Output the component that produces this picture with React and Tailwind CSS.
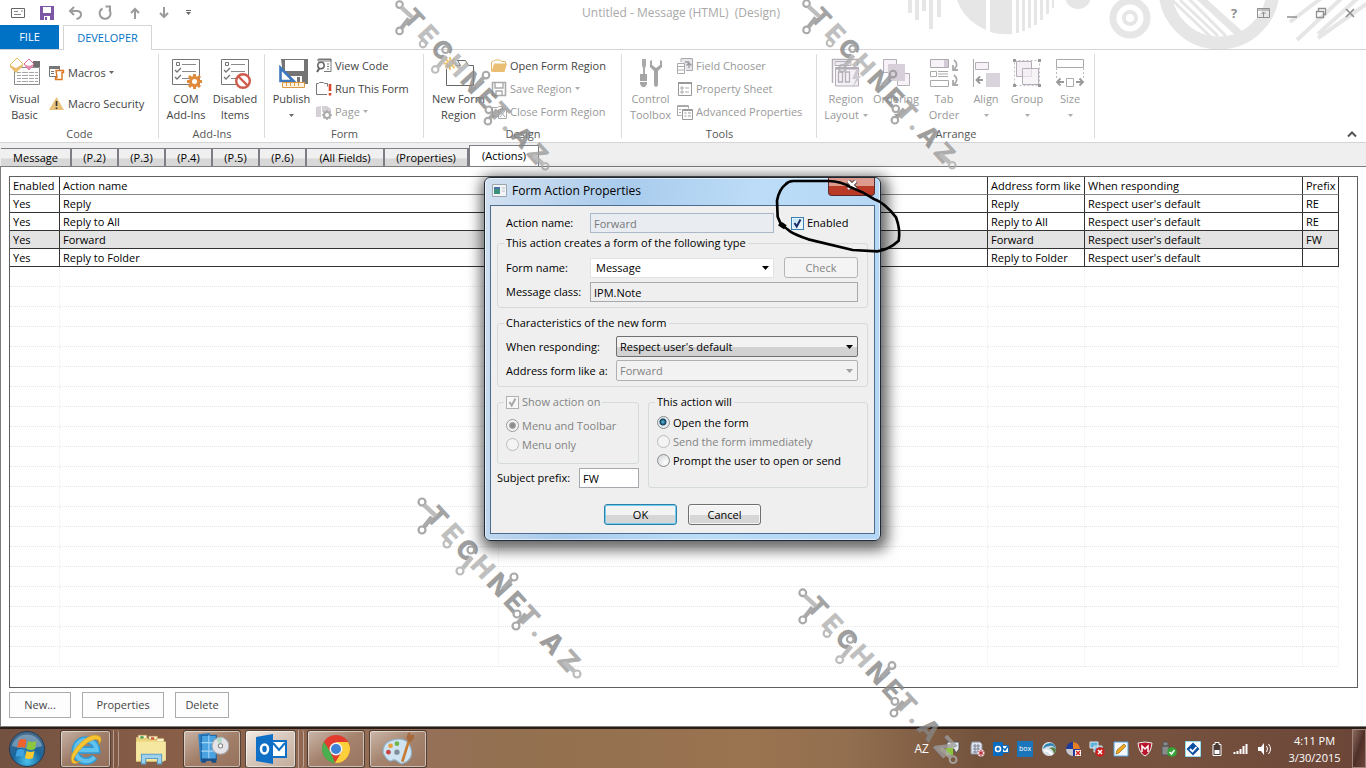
import { useState } from "react";
import clsx from "clsx";

const TABS = ["Message", "(P.2)", "(P.3)", "(P.4)", "(P.5)", "(P.6)", "(All Fields)", "(Properties)", "(Actions)"];

const ACTIONS = [
  { name: "Reply", like: "Reply", prefix: "RE" },
  { name: "Reply to All", like: "Reply to All", prefix: "RE" },
  { name: "Forward", like: "Forward", prefix: "FW" },
  { name: "Reply to Folder", like: "Reply to Folder", prefix: "" },
];

const EMPTY_ROWS = Array.from({ length: 20 }, (_, i) => i);

/* ---------- icons ---------- */

function Svg({ size = 16, box, children, className }) {
  return (
    <svg
      width={size}
      height={size}
      viewBox={`0 0 ${box || size} ${box || size}`}
      fill="none"
      className={clsx("shrink-0", className)}
      aria-hidden="true"
    >
      {children}
    </svg>
  );
}

function Caret({ className }) {
  return (
    <svg width="5" height="3" viewBox="0 0 5 3" className={clsx("shrink-0", className)} aria-hidden="true">
      <path d="M0 0h5L2.500 3z" fill="currentColor" />
    </svg>
  );
}

const VisualBasicIcon = () => (
  <Svg size={32}>
    <path d="M5.500 10.500h25v17h-25z" fill="#fff" stroke="#8b8b8b" />
    <path d="M24 4h7v6h-7z" fill="#6d6d6d" />
    <path d="M8 15.500h21M8 18.500h21M8 21.500h21M8 24.500h21" stroke="#a6a6a6" />
    <path d="M12.500 12v15M19.500 12v15M25.500 12v15" stroke="#fff" />
    <path d="M1 8l7-7 6 6-7 7z" fill="#fff" stroke="#e3b968" />
    <path d="M1 8l6 3 7-4v2l-7 7-6-6z" fill="#e9bf6e" />
    <path d="M15 7l5-5 5 5-5 6z" fill="#fff" stroke="#d9689a" />
    <path d="M15 7l5 2 5-2-5 6z" fill="#e58bb1" />
  </Svg>
);

const MacrosIcon = () => (
  <Svg>
    <path d="M.5 2.500h10v9H.5z" fill="#fff" stroke="#777" />
    <path d="M0 1h11v3H0z" fill="#777" />
    <path d="M2 6.500h3M2 8.500h3M7 6.500h3" stroke="#777" />
    <path d="M7 5.500h7.500v2H13V14.500H6.500v-2H8z" fill="#fff" stroke="#d9761f" strokeWidth="1.400" />
  </Svg>
);

const WarningIcon = () => (
  <Svg>
    <path d="M7.500 1L15 14H0z" fill="#e9c27c" />
    <path d="M7.500 5v5M7.500 11.500v1.500" stroke="#333" strokeWidth="1.600" />
  </Svg>
);

const Checklist = () => (
  <>
    <path d="M2.500 2.500h27v25h-27z" fill="#fff" stroke="#777" />
    <path d="M12 7.500h14M12 14.500h14M12 21.500h8" stroke="#8a8a8a" />
    <path d="M6.500 5.500h3v3h-3z" stroke="#777" />
    <path d="M5 13l2 2 4-4M5 20l2 2 4-4" stroke="#777" strokeWidth="1.300" />
  </>
);

const ComAddInsIcon = () => (
  <Svg size={32}>
    <Checklist />
    <path d="M24.500 17v15M17 24.500h15M19 19l11 11M30 19L19 30" stroke="#e08a3c" strokeWidth="3" />
    <circle cx="24.500" cy="24.500" r="5.500" fill="#e08a3c" />
    <circle cx="24.500" cy="24.500" r="2.500" fill="#fff" />
  </Svg>
);

const DisabledItemsIcon = () => (
  <Svg size={32}>
    <Checklist />
    <circle cx="24" cy="24" r="6.800" fill="#fff" stroke="#cf5b4b" strokeWidth="2.400" />
    <path d="M19.500 19.500l9 9" stroke="#cf5b4b" strokeWidth="2.400" />
  </Svg>
);

const PublishIcon = () => (
  <Svg size={32}>
    <path d="M5 2h27v25H8z" fill="#757575" />
    <path d="M9 3h19v11H9z" fill="#fff" />
    <path d="M12 19h14v8H12z" fill="#fff" />
    <path d="M21 20h3v6h-3z" fill="#757575" />
    <path d="M4.500 11v13h13z" fill="#fff" stroke="#3f78bd" strokeWidth="2.600" />
    <path d="M6.500 25.500h22v5h-22z" fill="#fdf3e0" stroke="#dd9a45" />
    <path d="M10.500 26v3M14.500 26v3M18.500 26v3M22.500 26v3" stroke="#dd9a45" />
  </Svg>
);

const ViewCodeIcon = () => (
  <Svg>
    <path d="M3 1.500h12v12H8" stroke="#777" />
    <path d="M2 1h13v2H2zM11 6h2M11 8.500h2M11 11h2" stroke="#777" />
    <circle cx="5" cy="7.500" r="3.200" fill="#fff" stroke="#666" strokeWidth="1.500" />
    <path d="M3.500 10L1 14" stroke="#666" strokeWidth="2" />
  </Svg>
);

const RunFormIcon = () => (
  <Svg>
    <path d="M11 13.500H.5v-11h2l1-1h4l1 1h3v3" stroke="#777" />
    <path d="M14 3v7M14 12v2.500" stroke="#d9482b" strokeWidth="2.600" />
  </Svg>
);

const PageIcon = () => (
  <Svg>
    <path d="M0 3l5-1v11H0zM6 2h5l4 3v3H6z" fill="#d5d0d6" />
    <circle cx="11" cy="11" r="3" stroke="#aaa" strokeWidth="2" />
    <path d="M11 6v2M11 14v2M6 11h2M14 11h2M7.500 7.500l1.500 1.500M13 13l1.500 1.500M14.500 7.500L13 9M9 13l-1.500 1.500" stroke="#aaa" strokeWidth="1.500" />
  </Svg>
);

const NewRegionIcon = () => (
  <Svg size={32}>
    <path d="M3.500 12v16.500h27v-20h-5l-3-5h-8l3 5h-5" stroke="#666" />
    <path d="M7 0v13M.5 6.500h13M2.500 2l9 9M11.500 2l-9 9" stroke="#edc36b" strokeWidth="1.800" />
    <circle cx="7" cy="6.500" r="2" fill="#fff" />
  </Svg>
);

const OpenFolderIcon = () => (
  <Svg>
    <path d="M.5 13V4l4-2h5l1 1.500h4V6" fill="#fff" stroke="#e3b968" />
    <path d="M3 5.500h13L13.500 14H.5z" fill="#eabf73" />
  </Svg>
);

const SaveRegionIcon = () => (
  <Svg>
    <path d="M1.500 1.500h13v13h-13z" stroke="#aaa" strokeWidth="1.600" />
    <path d="M4 2v5h8V2M5 14v-4h6v4" stroke="#aaa" strokeWidth="1.400" />
  </Svg>
);

const CloseRegionIcon = () => (
  <Svg>
    <path d="M1.500 3.500h5l1-1h4v3M1.500 3.500v9h5" stroke="#aaa" />
    <path d="M7.500 5.500h8v9h-8zM9 7l5 6M14 7l-5 6" stroke="#aaa" />
  </Svg>
);

const ToolboxIcon = () => (
  <Svg size={32}>
    <path d="M7 2h4v7l-1 2v6H8v-6L7 9z" fill="#aaa" />
    <path d="M5 17h7v10l-2 3H7l-2-3z" fill="#a5a5a5" />
    <path d="M5 24.500h7" stroke="#fff" />
    <path d="M15 4v6l4 4v14q2 4 4 0V14l4-4V4l-2-1v5l-4 3-4-3V3z" fill="#a5a5a5" />
  </Svg>
);

const FieldChooserIcon = () => (
  <Svg>
    <path d="M4 .5h11.500v12H9M4 .5V4" fill="#e9e5ec" stroke="#aaa" />
    <path d="M.5 5.500h7v10h-7zM.5 8.500h7M.5 12h7" stroke="#aaa" />
    <path d="M8 4h4M12 10V5M9.500 7.500L12 5l2.500 2.500" stroke="#999" strokeWidth="1.300" />
  </Svg>
);

const PropertySheetIcon = () => (
  <Svg>
    <path d="M1.500 1.500h13v13h-13z" stroke="#999" />
    <path d="M1 2h14" stroke="#999" strokeWidth="2" />
    <path d="M4 6h2v2H4zM4 10h2v2H4zM8 7h4M8 11h4" stroke="#aaa" />
  </Svg>
);

const AdvancedIcon = () => (
  <Svg>
    <path d="M.5 1.500h11v3M.5 1.500v10h4M0 2.500h12M2 5.500h2M2 8.500h2" stroke="#aaa" />
    <path d="M5.500 5.500h10v10h-10zM5 6.500h11M7.500 9h2M7.500 12h2M11 9h3M11 12h3" stroke="#999" />
  </Svg>
);

const RegionLayoutIcon = () => (
  <Svg size={32}>
    <path d="M2.500 26V2.500h25V9" stroke="#b5aeb8" strokeWidth="1.500" />
    <path d="M5 4.500h16v4H5z" fill="#efebf2" stroke="#b5aeb8" />
    <path d="M5.500 10.500h23V29h-23z" fill="#f4f1f6" stroke="#b5aeb8" />
    <path d="M5 11.500h24" stroke="#b5aeb8" strokeWidth="2" />
    <path d="M8.500 15h4v10h-4zM15.500 15h4v10h-4z" stroke="#b5aeb8" strokeWidth="1.300" />
    <path d="M26 13l-4 9h4l-4 9 9-12h-4l3-6z" fill="#cfcad2" />
  </Svg>
);

const OrderingIcon = () => (
  <Svg size={32}>
    <path d="M3.500 2.500h13v13h-13zM17.500 16.500h12v12h-12z" fill="#f6f2f8" stroke="#b5aeb8" />
    <path d="M8 7h17v17H8z" fill="#d7d0da" />
  </Svg>
);

const TabOrderIcon = () => (
  <Svg size={32}>
    <path d="M2.500 2.500h18v8h-18z" fill="#f6f2f8" stroke="#aaa" />
    <path d="M16 3h4v7h-4z" fill="#d3ccd6" />
    <path d="M2.500 14.500h6v5h-6zM10 14.500h10M10 17h10M10 19.500h10M2.500 23.500h18v6h-18z" stroke="#aaa" />
    <path d="M26 3q6 5-1 10M25 8v5h5M26 18q6 5-1 10M25 23v5h5" stroke="#aaa" strokeWidth="1.800" />
  </Svg>
);

const AlignIcon = () => (
  <Svg size={32}>
    <path d="M3.500 2v28" stroke="#aaa" />
    <path d="M5.500 5.500h13v7h-13z" fill="#f6f2f8" stroke="#b5aeb8" />
    <path d="M16 16h14v14H16z" fill="#d9d3dc" />
    <path d="M13 23H7M10 19.500L6.500 23l3.500 3.500" stroke="#999" strokeWidth="1.800" />
  </Svg>
);

const GroupIcon = () => (
  <Svg size={32}>
    <path d="M3.500 3.500h25v25h-25z" stroke="#c3bdc6" strokeDasharray="2 2" />
    <path d="M5.500 4.500h15v15h-15z" fill="#f3eff5" stroke="#b5aeb8" />
    <path d="M11.500 11.500h16v16h-16z" fill="#f3eff5" fillOpacity=".7" stroke="#b5aeb8" />
    <path d="M2 2h3v3H2zM27 2h3v3h-3zM2 27h3v3H2zM27 27h3v3h-3z" fill="#999" />
  </Svg>
);

const SizeIcon = () => (
  <Svg size={32}>
    <path d="M2.500 2.500h27v8h-27z" stroke="#aaa" />
    <path d="M2.500 11v10M29.500 11v10" stroke="#bbb" strokeDasharray="2 2" />
    <path d="M12.500 21.500h7v8h-7z" stroke="#aaa" />
    <path d="M10 25H3M6.500 21.500L3 25l3.500 3.500M22 25h7M25.500 21.500L29 25l-3.500 3.500" stroke="#999" strokeWidth="1.800" />
  </Svg>
);

/* ---------- title bar ---------- */

function TitleArt() {
  return (
    <svg width="466" height="50" viewBox="900 0 466 50" className="absolute right-0 top-0" aria-hidden="true">
      <g fill="#e6e6e6">
        <path d="M908 0h4v13h-4zM915 0h4v20h-4zM922 0h4v11h-4zM929 0h4v29h-4zM937 0h4v17h-4z" />
        <path d="M957 0Q964 20 986 30V0zM990 0v32q10 3 22 2V0zM1016 0h3v33h-3zM1022 0h3v31h-3zM1028 0h3v28h-3zM1034 0h3v25h-3zM1040 0h3v20h-3zM1046 0h3v14h-3zM1052 0h2v8h-2z" />
        <circle cx="1078" cy="-4" r="13" />
      </g>
      <g fill="none" stroke="#e6e6e6">
        <circle cx="1130" cy="18" r="17" strokeWidth="7" />
        <circle cx="1130" cy="18" r="6" strokeWidth="4" />
        <circle cx="1219" cy="-11" r="54" strokeWidth="13" />
        <path d="M1172 0l40 38M1180 0l38 36M1188 -2l38 38M1205 0l36 32" strokeWidth="3" />
        <path d="M1198 -4l42 39" strokeWidth="7" />
        <path d="M1324 -4l-34 26M1344 -4l-47 44M1358 -2l-40 36M1372 0l-54 38" strokeWidth="4" />
      </g>
    </svg>
  );
}

function TitleBar() {
  const quick = "flex h-6 w-7 items-center justify-center";
  const quickWide = "flex h-6 w-[30px] items-center justify-center";
  return (
    <div className="relative flex h-[25px] items-center">
      <TitleArt />
      <div className="relative flex flex-1 items-center pl-1 text-[#9b9b9b]">
        <button className={quick} aria-label="Message">
          <Svg>
            <path d="M1.500 3.500h13v9h-13z" stroke="#666" />
            <path d="M4 6.500h4M4 9.500h7M11 6h2" stroke="#888" />
          </Svg>
        </button>
        <button className={quickWide} aria-label="Save">
          <Svg>
            <path d="M1 1h14v14H1z" fill="#7b57a5" />
            <path d="M4 2h8v6H4zM5 11h6v4H5z" fill="#fff" />
            <path d="M6 12h2v3H6z" fill="#7b57a5" />
          </Svg>
        </button>
        <button className={quick} aria-label="Undo">
          <Svg>
            <path d="M2 6h7q4 0 4 3.500T8.500 14M6 2L2 6l4 4" stroke="currentColor" strokeWidth="2" />
          </Svg>
        </button>
        <button className={quickWide} aria-label="Redo">
          <Svg>
            <path d="M5.500 3.500A5.500 5.500 0 1 0 12 4.500M8.500 1.500H13V6" stroke="currentColor" strokeWidth="2" />
          </Svg>
        </button>
        <button className={quickWide} aria-label="Previous">
          <Svg>
            <path d="M8 14V4M4 8l4-4 4 4" stroke="currentColor" strokeWidth="2" />
          </Svg>
        </button>
        <button className={quick} aria-label="Next">
          <Svg>
            <path d="M8 2v10M4 8l4 4 4-4" stroke="currentColor" strokeWidth="2" />
          </Svg>
        </button>
        <button className="flex h-6 w-5 flex-col items-center justify-center gap-px text-[#666]" aria-label="Customize">
          <span className="h-px w-[5px] bg-[#666]" />
          <Caret />
        </button>
      </div>
      <h1 className="relative text-[12px] whitespace-pre text-[#a9a9a9]">Untitled - Message (HTML)  (Design)</h1>
      <div className="relative flex flex-1 items-center justify-end gap-[13px] pr-2 text-[#8f8f8f]">
        <button className="w-4 text-[13px] font-bold" aria-label="Help">?</button>
        <button aria-label="Ribbon display options">
          <Svg>
            <path d="M2.500 3.500h12v9h-12zM2 5h13M8.500 12V7M6.500 9l2-2 2 2" stroke="currentColor" />
          </Svg>
        </button>
        <button aria-label="Minimize">
          <Svg>
            <path d="M3 12h10" stroke="currentColor" strokeWidth="1.500" />
          </Svg>
        </button>
        <button aria-label="Restore">
          <Svg>
            <path d="M3.500 6.500h7v6h-7zM5.500 6V3.500h7v6H11" stroke="currentColor" strokeWidth="1.300" />
          </Svg>
        </button>
        <button aria-label="Close">
          <Svg>
            <path d="M4 4l8 8M12 4l-8 8" stroke="currentColor" strokeWidth="1.700" />
          </Svg>
        </button>
      </div>
    </div>
  );
}

/* ---------- ribbon ---------- */

function RibbonGroup({ label, className, children }) {
  return (
    <section className={clsx("relative flex shrink-0 flex-col pt-1", className)}>
      <div className="flex h-18">{children}</div>
      <h2 className="text-center leading-4 text-[#555]">{label}</h2>
      <span className="absolute top-1 right-0 h-21 w-px bg-[#dcdcdc]" />
    </section>
  );
}

function BigButton({ icon, lines, caret, disabled, className }) {
  return (
    <button
      disabled={disabled}
      className={clsx(
        "flex h-[69px] shrink-0 flex-col items-center",
        disabled ? "text-[#999]" : "text-[#444]",
        className
      )}
    >
      <span className="flex h-[37px] items-center">{icon}</span>
      <span className="leading-4 whitespace-nowrap">{lines[0]}</span>
      <span className="flex h-4 items-center gap-1 leading-4 whitespace-nowrap">
        {lines[1]}
        {caret && <Caret className="opacity-80" />}
      </span>
    </button>
  );
}

function SmallButton({ icon, label, caret, disabled }) {
  return (
    <button
      disabled={disabled}
      className={clsx(
        "flex h-[23px] items-center gap-[3px] whitespace-nowrap",
        disabled ? "text-[#999]" : "text-[#444]"
      )}
    >
      {icon}
      {label}
      {caret && <Caret className="opacity-80" />}
    </button>
  );
}

function Ribbon() {
  return (
    <div className="flex h-[93px] border-b border-[#d4d4d4] bg-white">
      <RibbonGroup label="Code" className="w-[159px]">
        <BigButton icon={<VisualBasicIcon />} lines={["Visual", "Basic"]} className="w-[49px]" />
        <div className="flex flex-col gap-2 pt-[7px]">
          <SmallButton icon={<MacrosIcon />} label="Macros" caret />
          <SmallButton icon={<WarningIcon />} label="Macro Security" />
        </div>
      </RibbonGroup>
      <RibbonGroup label="Add-Ins" className="w-[106px] px-0.5">
        <BigButton icon={<ComAddInsIcon />} lines={["COM", "Add-Ins"]} className="w-[50px]" />
        <BigButton icon={<DisabledItemsIcon />} lines={["Disabled", "Items"]} className="w-12" />
      </RibbonGroup>
      <RibbonGroup label="Form" className="w-[159px] px-0.5">
        <BigButton icon={<PublishIcon />} lines={["Publish", ""]} caret className="w-[49px]" />
        <div className="flex flex-col">
          <SmallButton icon={<ViewCodeIcon />} label="View Code" />
          <SmallButton icon={<RunFormIcon />} label="Run This Form" />
          <SmallButton icon={<PageIcon />} label="Page" caret disabled />
        </div>
      </RibbonGroup>
      <RibbonGroup label="Design" className="w-[198px] px-0.5">
        <BigButton icon={<NewRegionIcon />} lines={["New Form", "Region"]} className="w-[65px]" />
        <div className="flex flex-col">
          <SmallButton icon={<OpenFolderIcon />} label="Open Form Region" />
          <SmallButton icon={<SaveRegionIcon />} label="Save Region" caret disabled />
          <SmallButton icon={<CloseRegionIcon />} label="Close Form Region" disabled />
        </div>
      </RibbonGroup>
      <RibbonGroup label="Tools" className="w-[195px] px-0.5">
        <BigButton icon={<ToolboxIcon />} lines={["Control", "Toolbox"]} disabled className="w-[53px]" />
        <div className="flex flex-col">
          <SmallButton icon={<FieldChooserIcon />} label="Field Chooser" disabled />
          <SmallButton icon={<PropertySheetIcon />} label="Property Sheet" disabled />
          <SmallButton icon={<AdvancedIcon />} label="Advanced Properties" disabled />
        </div>
      </RibbonGroup>
      <RibbonGroup label="Arrange" className="w-[278px] px-1">
        <BigButton icon={<RegionLayoutIcon />} lines={["Region", "Layout"]} caret disabled className="w-[50px]" />
        <BigButton icon={<OrderingIcon />} lines={["Ordering", ""]} caret disabled className="w-[50px]" />
        <BigButton icon={<TabOrderIcon />} lines={["Tab", "Order"]} disabled className="w-[46px]" />
        <BigButton icon={<AlignIcon />} lines={["Align", ""]} caret disabled className="w-[38px]" />
        <BigButton icon={<GroupIcon />} lines={["Group", ""]} caret disabled className="w-11" />
        <BigButton icon={<SizeIcon />} lines={["Size", ""]} caret disabled className="w-[42px]" />
      </RibbonGroup>
      <div className="flex flex-1 items-end justify-end pr-2 pb-1">
        <button aria-label="Collapse the ribbon">
          <svg width="12" height="8" viewBox="0 0 12 8" fill="none" aria-hidden="true">
            <path d="M2 6.500l4-4 4 4" stroke="#555" strokeWidth="2" />
          </svg>
        </button>
      </div>
    </div>
  );
}

/* ---------- actions page ---------- */

function PageTabs({ active, onSelect }) {
  return (
    <div className="flex h-[23px] items-end bg-[#efefef] pl-px">
      {TABS.map((tab) => (
        <button
          key={tab}
          onClick={() => onSelect(tab)}
          className={clsx(
            "shrink-0 border-t border-r border-[#7d7d86] text-center text-black",
            tab === active
              ? "-mb-px h-[22px] border-l bg-white pb-0.5"
              : "h-[18px] border-r-2 bg-linear-to-b from-[#f0f0f0] from-50% to-[#d8d8d8] to-60%",
            tab.startsWith("(P.") && "w-[47px]",
            tab === "Message" && "w-[71px]",
            tab === "(All Fields)" && "w-[78px]",
            tab === "(Properties)" && "w-[84px]",
            tab === "(Actions)" && "w-[70px]"
          )}
        >
          {tab}
        </button>
      ))}
    </div>
  );
}

function ActionsTable() {
  const th = "overflow-hidden border-r border-b border-[#85858b] border-r-[#333] px-[3px] text-left font-normal whitespace-nowrap";
  const td = "border-r border-b border-[#333] px-[3px] whitespace-nowrap";
  const empty = "border-r border-b border-dotted border-[#efefef] border-b-[#e6e6e6]";
  return (
    <div className="flex-1 border border-[#5f5f5f] pr-[18px]">
      <table className="w-full table-fixed border-separate border-spacing-0 leading-4 text-black">
        <colgroup>
          <col className="w-[50px]" />
          <col className="w-[33%]" />
          <col />
          <col className="w-[97px]" />
          <col className="w-[218px]" />
          <col className="w-9" />
        </colgroup>
        <thead>
          <tr className="h-[18px]">
            <th className={th}>Enabled</th>
            <th className={th}>Action name</th>
            <td className={th} />
            <th className={th}>Address form like</th>
            <th className={th}>When responding</th>
            <th className={th}>Prefix</th>
          </tr>
        </thead>
        <tbody>
          {ACTIONS.map((a) => (
            <tr key={a.name} className={clsx("h-[18px]", a.name === "Forward" && "bg-[#e3e3e3]")}>
              <td className={td}>Yes</td>
              <td className={td}>{a.name}</td>
              <td className={td}></td>
              <td className={td}>{a.like}</td>
              <td className={td}>Respect user's default</td>
              <td className={td}>{a.prefix}</td>
            </tr>
          ))}
          {EMPTY_ROWS.map((i) => (
            <tr key={i} className="h-5">
              <td className={empty} />
              <td className={empty} />
              <td className={empty} />
              <td className={empty} />
              <td className={empty} />
              <td className={empty} />
            </tr>
          ))}
        </tbody>
      </table>
    </div>
  );
}

/* ---------- dialog ---------- */

function TextField({ className, ...props }) {
  return <input type="text" className={clsx("h-5 border px-[3px]", className)} {...props} />;
}

function DropDown({ id, value, options, disabled, className, wrapper }) {
  return (
    <div className={clsx("relative flex", wrapper)}>
      <select
        id={id}
        defaultValue={value}
        disabled={disabled}
        className={clsx("w-full appearance-none border pr-5 opacity-100", className)}
      >
        {options.map((o) => (
          <option key={o}>{o}</option>
        ))}
      </select>
      <svg
        width="7"
        height="4"
        viewBox="0 0 7 4"
        className="pointer-events-none absolute top-1/2 right-[5px] -translate-y-1/2"
        aria-hidden="true"
      >
        <path d="M0 0h7L3.500 4z" fill={disabled ? "#a0a0a0" : "#000"} />
      </svg>
    </div>
  );
}

function CheckBox({ label, disabled }) {
  return (
    <label className={clsx("flex items-center gap-[3px]", disabled ? "text-[#838383]" : "text-black")}>
      <span className="relative flex">
        <input
          type="checkbox"
          defaultChecked
          disabled={disabled}
          className={clsx(
            "peer h-[13px] w-[13px] appearance-none border",
            disabled
              ? "border-[#b1b1b1] bg-[#f8f8f8]"
              : "border-[#3c7fb1] bg-linear-to-br from-[#b5dff5] to-white inset-ring inset-ring-[#e3f4fc]"
          )}
        />
        <svg
          width="13"
          height="13"
          viewBox="0 0 13 13"
          fill="none"
          className="pointer-events-none absolute inset-0 hidden peer-checked:block"
          aria-hidden="true"
        >
          <path d="M3.500 6l2.200 3.500L9.500 2.500" stroke={disabled ? "#a8a8a8" : "#1b2b6b"} strokeWidth="2" />
        </svg>
      </span>
      {label}
    </label>
  );
}

function Radio({ name, label, checked, disabled }) {
  return (
    <label className={clsx("flex h-[19px] items-center gap-[3px]", disabled ? "text-[#838383]" : "text-black")}>
      <input
        type="radio"
        name={name}
        defaultChecked={checked}
        disabled={disabled}
        className={clsx(
          "h-[13px] w-[13px] appearance-none rounded-full border",
          disabled
            ? "border-[#bcbcbc] bg-[#f4f4f4] checked:border-[#999] checked:bg-[radial-gradient(circle,#8c8c8c_0_2px,#a9a9a9_3px,#f4f4f4_4px)]"
            : "border-[#8a8c8e] bg-[radial-gradient(circle_at_70%_70%,#fff,#cfd2d5)] checked:bg-[radial-gradient(circle_at_45%_45%,#5cc4e8_0,#123c5a_3px,#123c5a_3px,#e4eaee_4px)]"
        )}
      />
      {label}
    </label>
  );
}

function Group({ legend, className, children }) {
  return (
    <fieldset className={clsx("rounded-[3px] border border-[#d5dadd] px-2", className)}>
      <legend className="-ml-0.5 h-4 px-0.5 leading-4">{legend}</legend>
      {children}
    </fieldset>
  );
}

function Scribble() {
  return (
    <svg
      width="135"
      height="80"
      viewBox="870 18 405 240"
      fill="none"
      className="pointer-events-none absolute -top-0.5 left-[285px]"
      aria-hidden="true"
    >
      <path
        d="M905 168L893 140L891 92Q897 58 918 42Q925 34 940 33L1045 33Q1085 34 1112 52Q1150 66 1180 86Q1215 98 1248 142Q1262 180 1256 212Q1228 238 1192 244L1118 240Q1060 226 985 208Q945 194 930 184Q915 170 900 164"
        stroke="#000"
        strokeWidth="8"
        strokeLinejoin="round"
        strokeLinecap="round"
      />
      <path d="M894 166l12-10 14 10-8 12z" fill="#000" />
    </svg>
  );
}

function ActionDialog() {
  const button =
    "h-[21px] w-[73px] rounded-[3px] border bg-linear-to-b from-[#f3f3f3] from-50% to-[#d6d6d6] to-55% text-black inset-ring";
  return (
    <div
      role="dialog"
      aria-labelledby="dialog-title"
      className="absolute top-[177px] left-[calc(50%-199px)] w-[397px] rounded-md border border-[#1e2a38] bg-[linear-gradient(100deg,#d3e1f0_0,#a9cbec_30%,#bcdcf7_60%,#b3d6f5_100%)] px-[5px] pb-1.5 text-black inset-ring inset-ring-white/60 shadow-[2px_4px_14px_5px_rgba(0,0,0,0.6)]"
    >
      <div className="flex h-[27px] justify-between">
        <div className="flex items-center gap-[5px] pb-0.5 pl-0.5">
          <Svg size={15}>
            <path d="M.5 1.500h14v12H.5z" fill="#f1f3f4" stroke="#9aa7b3" />
            <path d="M2 4h6v7H2z" fill="#3f8f7d" />
            <path d="M2 4h6v2H2z" fill="#4a72a8" />
            <path d="M10 5h3M10 8h3" stroke="#b9c2c9" />
          </Svg>
          <h2 id="dialog-title" className="text-[12px]">Form Action Properties</h2>
        </div>
        <button
          aria-label="Close"
          className="flex h-[18px] w-[47px] items-center justify-center rounded-b-[4px] border border-t-0 border-[#5b2a2a] bg-linear-to-b from-[#dd9a8e] from-45% to-[#b93a26] to-50% pb-1"
        >
          <svg width="12" height="10" viewBox="0 0 12 10" fill="none" aria-hidden="true">
            <path d="M2 1l8 8M10 1L2 9" stroke="#4b3535" strokeWidth="4.500" />
            <path d="M2 1l8 8M10 1L2 9" stroke="#fff" strokeWidth="2.500" />
          </svg>
        </button>
      </div>
      <form
        className="flex flex-col border border-[#4d6b8c] bg-[#efefef] px-1.5 pt-[7px] pb-2"
        onSubmit={(e) => e.preventDefault()}
      >
        <div className="flex items-center pl-[9px]">
          <label htmlFor="action-name" className="w-[84px]">Action name:</label>
          <TextField
            id="action-name"
            defaultValue="Forward"
            disabled
            className="mr-[17px] w-[184px] border-[#a9b9c8] bg-[#e9edf2] text-[#777]"
          />
          <CheckBox label="Enabled" />
        </div>

        <Group legend="This action creates a form of the following type" className="mt-0.5 flex flex-col pt-1.5 pb-[5px]">
          <div className="flex flex-col gap-1">
            <div className="flex items-center">
              <label htmlFor="form-name" className="w-[84px]">Form name:</label>
              <DropDown
                id="form-name"
                value="Message"
                options={["Message", "Post", "Task"]}
                wrapper="mr-2.5 w-[184px]"
                className="h-5 border-[#e3e3e3] bg-white pl-[5px]"
              />
              <button disabled className="h-[21px] w-[74px] rounded-[3px] border border-[#b5b5b5] bg-[#f4f4f4] text-[#838383]">
                Check
              </button>
            </div>
            <div className="flex items-center">
              <label htmlFor="message-class" className="w-[84px]">Message class:</label>
              <TextField
                id="message-class"
                defaultValue="IPM.Note"
                readOnly
                className="w-[268px] border-[#a5a9ad] bg-[#efefef]"
              />
            </div>
          </div>
        </Group>

        <Group legend="Characteristics of the new form" className="mt-[7px] pt-[5px] pb-[5px]">
          <div className="flex flex-col gap-[3px]">
            <div className="flex items-center">
              <label htmlFor="responding" className="w-[110px]">When responding:</label>
              <DropDown
                id="responding"
                value="Respect user's default"
                options={["Respect user's default", "Do not include original message"]}
                wrapper="w-[242px]"
                className="h-[21px] rounded-[2px] border-[#707070] bg-linear-to-b from-[#f2f2f2] from-50% to-[#d2d2d2] to-55% pl-[3px]"
              />
            </div>
            <div className="flex items-center">
              <label htmlFor="address-like" className="w-[110px]">Address form like a:</label>
              <DropDown
                id="address-like"
                value="Forward"
                options={["Forward", "Reply", "Reply to All"]}
                disabled
                wrapper="w-[242px]"
                className="h-[21px] rounded-[2px] border-[#b0b0b0] bg-[#f2f2f2] pl-[3px] text-[#838383]"
              />
            </div>
          </div>
        </Group>

        <div className="mt-[7px] flex gap-[9px]">
          <div className="flex w-[142px] flex-col gap-1">
            <Group legend={<CheckBox label="Show action on" disabled />} className="pt-1.5 pb-[9px]">
              <Radio name="show" label="Menu and Toolbar" checked disabled />
              <Radio name="show" label="Menu only" disabled />
            </Group>
            <div className="flex items-center justify-between">
              <label htmlFor="prefix">Subject prefix:</label>
              <TextField id="prefix" defaultValue="FW" className="w-[60px] border-[#a5a9ad] bg-white" />
            </div>
          </div>
          <Group legend="This action will" className="flex-1 pt-[3px]">
            <Radio name="will" label="Open the form" checked />
            <Radio name="will" label="Send the form immediately" disabled />
            <Radio name="will" label="Prompt the user to open or send" />
          </Group>
        </div>

        <div className="mt-4 flex justify-center gap-[11px]">
          <button className={clsx(button, "border-[#2f7fa8] inset-ring-[#6fcdf0]")}>OK</button>
          <button className={clsx(button, "border-[#707070] inset-ring-white/70")}>Cancel</button>
        </div>
      </form>
      <Scribble />
    </div>
  );
}

/* ---------- taskbar ---------- */

function TaskButton({ label, active, className, children }) {
  return (
    <button
      aria-label={label}
      className={clsx(
        "flex h-[38px] items-center justify-center rounded-[3px] border border-[#3a2a22]/80 inset-ring inset-ring-white/50",
        active
          ? "bg-linear-to-br from-[#f3ebe4] via-[#d6c6ba] to-[#c2ab9b]"
          : "bg-linear-to-br from-[#d9cabf]/80 via-[#ab8c77]/70 to-[#9a7863]/70",
        className
      )}
    >
      {children}
    </button>
  );
}

function TrayIcons() {
  return (
    <div className="flex items-center gap-2">
      <Svg>
        <path d="M2 1h12v7l-3 4-2-4H2z" fill="#e9e9e9" stroke="#555" />
        <path d="M1 7h7v7H1z" fill="#8cc63f" />
      </Svg>
      <Svg>
        <path d="M3 1h8l2 2v10H2V4z" fill="#dfe3ec" stroke="#8a8fa0" />
        <path d="M4 5h7M4 8h7M4 11h5M6 3v9M9 3v9" stroke="#7d8498" />
        <circle cx="12" cy="12" r="3.500" fill="#f1dede" />
        <path d="M12 9v6M9.500 10.500l5 3M14.500 10.500l-5 3" stroke="#b8232f" />
      </Svg>
      <Svg>
        <path d="M0 1h10v14H0zM9 4h7v8H9z" fill="#0a6cc0" />
        <circle cx="5" cy="8" r="2.500" stroke="#fff" strokeWidth="1.500" />
        <path d="M10 5h5v6h-5z" fill="#fff" />
        <path d="M10 7l2 2 3-4" stroke="#0a6cc0" strokeWidth="1.500" />
      </Svg>
      <span className="flex h-4 w-4 items-center justify-center bg-[#1b75bb] text-[7px] leading-4 text-white">box</span>
      <Svg>
        <circle cx="8" cy="8" r="7" fill="#d9e2e8" />
        <path d="M2 8q1-6 8-6 4 1 5 6-3-4-6-3-4 0-7 3z" fill="#2b83b5" />
        <path d="M8 7q4 1 5 6 2-2 2-5-3-3-7-1z" fill="#5d7f48" />
        <path d="M3 10q4-2 8 4" stroke="#fff" strokeWidth="2" />
      </Svg>
      <Svg>
        <circle cx="8" cy="8" r="7" fill="#1f3b9b" />
        <path d="M8 8V1a7 7 0 0 1 7 7z" fill="#e58022" />
        <path d="M8 8H1a7 7 0 0 0 7 7z" fill="#c9c9c9" />
        <path d="M10 9h6v6h-6z" fill="#fff" />
        <path d="M11 10l4 4M15 10l-4 4" stroke="#d5281e" strokeWidth="1.500" />
      </Svg>
      <Svg>
        <path d="M1 1h8v6H1zM5 5h8v6H5z" fill="#5eb2dc" stroke="#dfe8ee" />
        <circle cx="11" cy="11" r="4.800" fill="#c8201f" />
        <path d="M9 9l4 4M13 9l-4 4" stroke="#fff" strokeWidth="1.500" />
      </Svg>
      <Svg>
        <path d="M1 1h14v14H1z" fill="#f3f7fb" stroke="#58a1dc" />
        <path d="M3 13l1-4 7-6 2 2-7 7z" fill="#f2a71b" stroke="#8a6a2b" strokeWidth=".7" />
      </Svg>
      <Svg>
        <path d="M1 2q7-2 14 0-1 10-7 13Q2 12 1 2z" fill="#b8152b" stroke="#eee" />
        <path d="M5 11V5l3 3 3-3v6" stroke="#fff" strokeWidth="1.500" />
      </Svg>
      <Svg>
        <path d="M2 1h5v4H2zM1 5h7v9H1z" fill="#8b8b8b" stroke="#555" />
        <circle cx="11" cy="11" r="4.800" fill="#35a336" />
        <path d="M8.500 11l2 2 3-4" stroke="#fff" strokeWidth="1.500" />
      </Svg>
      <Svg>
        <path d="M0 0h16v16H0z" fill="#fff" stroke="#2bb5c9" />
        <path d="M8 1.500L14.500 8 8 14.500 1.500 8z" fill="#0c4ea2" />
        <path d="M5 8l2.500 2.500L11.500 6" stroke="#fff" strokeWidth="1.800" />
      </Svg>
      <Svg>
        <path d="M6 1.500h4v2h2v11H4v-11h2z" fill="#4b3b35" stroke="#fff" />
        <path d="M5.500 9h5v4h-5z" fill="#fff" />
      </Svg>
      <Svg>
        <path d="M1.500 13v-2M4.500 13v-3M7.500 13V8M10.500 13V5M13.500 13V3" stroke="#fff" strokeWidth="2" />
      </Svg>
      <Svg>
        <path d="M1 6h3l3-4v12l-3-4H1z" fill="#fff" />
        <path d="M9.500 5q2 3 0 6M11.500 3q4 5 0 10" stroke="#fff" />
      </Svg>
    </div>
  );
}

function Taskbar() {
  return (
    <footer className="flex h-[41px] shrink-0 items-center border-t-2 border-[#2a1c16] bg-[linear-gradient(90deg,#735141_0,#8a5f48_14%,#96705a_30%,#93704f_38%,#9a7350_55%,#936f50_62%,#73523c_72%,#77523f_85%,#6b4638_100%)]">
      <button aria-label="Start" className="flex w-[54px] justify-center">
        <Svg size={38} box={38}>
          <defs>
            <radialGradient id="orb" cx=".5" cy=".85" r=".8">
              <stop offset="0" stopColor="#48c4ee" />
              <stop offset=".5" stopColor="#1a669c" />
              <stop offset="1" stopColor="#456b8d" />
            </radialGradient>
          </defs>
          <circle cx="19" cy="19" r="17.500" fill="url(#orb)" stroke="#243a50" />
          <path d="M4 16a15.500 15.500 0 0 1 30 0q-14 5-30 0z" fill="#fff" fillOpacity=".3" />
          <path d="M11 10q4-2 7.500 0L17 18q-4-2-8 0z" fill="#f0622d" />
          <path d="M20 11q4 2 8.500 0L27 19q-4 2-8.500 0z" fill="#8cc63f" />
          <path d="M9 20q4-2 7.500 0L15 27q-4-2-7.500 0z" fill="#3fa4e3" />
          <path d="M18.500 21q4 2 8 0L25 28q-4 2-8 0z" fill="#fbc92e" />
        </Svg>
      </button>
      <div className="flex flex-1 items-center pl-1.5">
        <TaskButton label="Internet Explorer" className="w-[51px]">
          <Svg size={34} box={32}>
            <path d="M8.500 17H26a10 10 0 1 0-2 6.500" stroke="#2f9bd8" strokeWidth="7" />
            <path d="M8.500 17H26a10 10 0 1 0-2 6.500" stroke="#63c3ef" strokeWidth="4" />
            <path d="M3 29Q-1 22 10 11T29 4q3 3-1 8 1-5-2-5-7 0-15 9T5 27q2 2 6 0-5 4-8 2z" fill="#f7c531" stroke="#c98f1c" strokeWidth=".5" />
          </Svg>
        </TaskButton>
        <span className="ml-0.5 h-[38px] w-1.5 rounded-r-[3px] border-r border-l border-white/40" />
        <button aria-label="Windows Explorer" className="flex h-[38px] w-16 items-center justify-center">
          <Svg size={34} box={32}>
            <path d="M2 5h10l2 2h14v21H2z" fill="#ecd47c" />
            <path d="M4 3h8v3H4zM14 4h8v3h-8zM21 6h7v3h-7z" fill="#fbf3cf" stroke="#c9ac55" strokeWidth=".5" />
            <path d="M6 4h3v2H6z" fill="#3a9b50" />
            <path d="M16 5h3v2h-3z" fill="#d84b37" />
            <path d="M2 9h28v18H2z" fill="#f6e7a0" />
            <path d="M7 30V21h19v9h-4v-5H11v5z" fill="#9fd0ee" stroke="#5a9fc9" />
          </Svg>
        </button>
        <TaskButton label="Devices" className="w-[58px]">
          <Svg size={34} box={32}>
            <path d="M3 2l11-1v26l-9 1z" fill="#2f83c9" />
            <path d="M6 3h14v23H6z" fill="#4aa3e0" stroke="#1d5f9b" />
            <path d="M13 3v23M6 10h14M6 18h14" stroke="#a6d5f5" />
            <path d="M6 25h14v4h-4l-1-2h-4l-1 2H6z" fill="#1b4f86" />
            <circle cx="24" cy="13" r="8" fill="#e4e4e8" stroke="#a3a3aa" />
            <path d="M24 13l-4-6a8 8 0 0 1 6-2z" fill="#b3d9c8" />
            <circle cx="24" cy="13" r="2" fill="#fff" stroke="#888" />
          </Svg>
        </TaskButton>
        <TaskButton label="Outlook" active className="ml-1 w-[51px]">
          <Svg size={32}>
            <path d="M17 8h14v16H17z" fill="#fff" stroke="#0f6fc6" strokeWidth="2" />
            <path d="M18 10l6 7 6-7" stroke="#0f6fc6" strokeWidth="2" />
            <path d="M1 4l17-3v30L1 28z" fill="#0f6fc6" />
            <ellipse cx="9.500" cy="16" rx="3.500" ry="4.500" stroke="#fff" strokeWidth="2.500" />
          </Svg>
        </TaskButton>
        <span className="ml-0.5 h-[38px] w-1.5 rounded-r-[3px] border-r border-l border-white/40" />
        <TaskButton label="Chrome" className="ml-[3px] w-[58px]">
          <Svg size={32}>
            <circle cx="16" cy="16" r="14" fill="#e33b2e" />
            <path d="M4 9l8 14 3 7A14 14 0 0 1 4 9z" fill="#4bae4f" />
            <path d="M16 9h12a14 14 0 0 1-13 21l7-12z" fill="#fbd03b" />
            <path d="M4 9l7 11 4 10A14 14 0 0 1 4 9z" fill="#4bae4f" />
            <circle cx="16" cy="16" r="6.500" fill="#f4f4f4" />
            <circle cx="16" cy="16" r="5" fill="#3f83d6" />
          </Svg>
        </TaskButton>
        <TaskButton label="Paint" className="ml-1 w-[58px]">
          <Svg size={34} box={32}>
            <path d="M2 20Q1 9 13 7t15 8-6 14q-3 2-6-1t-6-1-8-7z" fill="#cfe4f2" stroke="#8fb0c6" />
            <circle cx="9" cy="13" r="2.200" fill="#e9a13b" />
            <circle cx="15" cy="11" r="2.200" fill="#6db54c" />
            <circle cx="7" cy="19" r="2.200" fill="#cc4141" />
            <circle cx="15" cy="19" r="2.500" fill="#7f8d98" />
            <path d="M20 28l6-19" stroke="#c77b33" strokeWidth="2.500" />
            <path d="M24 6q0-4 3-6l1 3 3-1q1 5-4 8z" fill="#a86a3c" />
          </Svg>
        </TaskButton>
      </div>
      <span className="mr-4 text-[12px] text-white">AZ</span>
      <TrayIcons />
      <div className="w-[79px] pl-1 text-center leading-[17px] text-white">
        <div>4:11 PM</div>
        <div>3/30/2015</div>
      </div>
      <button
        aria-label="Show desktop"
        className="h-[39px] w-3.5 border border-[#a08478] bg-linear-to-br from-[#8d6c62] via-[#4f3029] to-[#6d473c]"
      />
    </footer>
  );
}

/* ---------- watermark ---------- */

const MARK_LETTERS = [
  ["T", 5, "#8e8e8e"],
  ["E", 28, "#b0b0b0"],
  ["C", 50, "#868686"],
  ["H", 73, "#b0b0b0"],
  ["N", 97, "#868686"],
  ["E", 120, "#868686"],
  ["T", 140, "#9c9c9c"],
  [".", 157, "#adadad"],
  ["A", 176, "#868686"],
  ["Z", 200, "#9c9c9c"],
];

function Watermark({ scale, className }) {
  return (
    <svg
      width={176 * scale}
      height={190 * scale}
      viewBox="0 0 176 190"
      className={clsx("pointer-events-none absolute overflow-visible opacity-80", className)}
      aria-hidden="true"
    >
      <g transform="translate(20 18) rotate(47.500)">
        <text y="10" fontSize="27" fontWeight="800" textAnchor="middle" className="font-['Inter']">
          {MARK_LETTERS.map(([letter, x, fill]) => (
            <tspan key={x} x={x} fill={fill}>
              {letter}
            </tspan>
          ))}
        </text>
      </g>
      <g fill="none" stroke="#949494" strokeWidth="2.200">
        <circle cx="8" cy="7" r="3.500" />
        <path d="M10 10l12 11" strokeWidth="4.500" stroke="#adadad" />
        <circle cx="8" cy="35" r="3.500" />
        <path d="M10 32l8-10" strokeWidth="4.500" />
        <circle cx="33" cy="49" r="3.500" stroke="#adadad" />
        <circle cx="57" cy="55" r="3.500" />
        <circle cx="46" cy="76" r="3.500" stroke="#adadad" />
        <path d="M49 73l9-11" strokeWidth="4.500" stroke="#adadad" />
        <circle cx="100" cy="82" r="3.500" />
        <path d="M97 85l-8 9" strokeWidth="4.500" />
        <circle cx="103" cy="119" r="3.500" />
        <circle cx="102" cy="131" r="3.500" />
        <path d="M104 128l8-9" strokeWidth="4.500" />
        <circle cx="163" cy="179" r="3.500" stroke="#adadad" />
        <path d="M160 176l-10-9" strokeWidth="4.500" stroke="#adadad" />
      </g>
    </svg>
  );
}

export default function App() {
  const [active, setActive] = useState("(Actions)");

  return (
    <div className="relative flex min-h-screen flex-col overflow-hidden bg-white font-['Open_Sans',sans-serif] text-[11px] leading-4">
      <TitleBar />
      <nav className="relative flex h-[25px] items-stretch border-b border-[#d4d4d4]">
        <button className="w-[59px] bg-[#0072c6] text-white">FILE</button>
        <button className="-mb-px ml-1 w-[89px] border border-b-0 border-[#d4d4d4] bg-white text-[#0072c6]">
          DEVELOPER
        </button>
      </nav>
      <Ribbon />
      <PageTabs active={active} onSelect={setActive} />
      <main className="flex flex-1 flex-col border-t border-b border-l border-[#7d7d7d] px-2 pt-[9px] pb-2">
        <ActionsTable />
        <div className="mt-1 flex gap-[11px] text-[#444]">
          <button className="h-[26px] w-[62px] border border-[#ababab] bg-[#fdfdfd]">New...</button>
          <button className="h-[26px] w-[82px] border border-[#ababab] bg-[#fdfdfd]">Properties</button>
          <button className="h-[26px] w-[54px] border border-[#ababab] bg-[#fdfdfd]">Delete</button>
        </div>
      </main>
      <Taskbar />

      <Watermark scale={0.94} className="top-[-2px] left-[392px]" />
      <Watermark scale={0.94} className="top-[-3px] left-[799px]" />
      <Watermark scale={1} className="top-[495px] left-[414px]" />
      <Watermark scale={0.97} className="top-[586px] left-[795px]" />
      <ActionDialog />
    </div>
  );
}
